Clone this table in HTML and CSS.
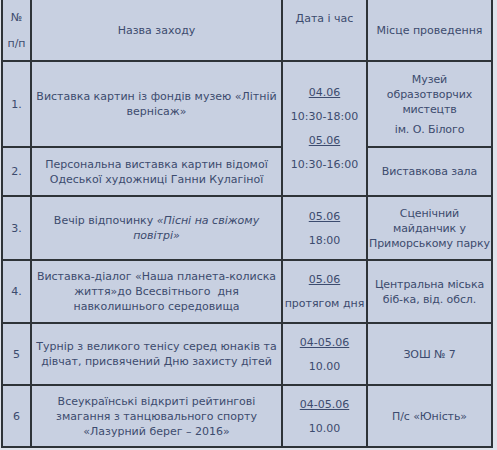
FILE: index.html
```html
<!DOCTYPE html>
<html lang="uk">
<head>
<meta charset="utf-8">
<title>План заходів</title>
<link rel="stylesheet" href="styles.css">
</head>
<body>
<table class="events">
  <colgroup>
    <col class="c-num">
    <col class="c-name">
    <col class="c-date">
    <col class="c-place">
  </colgroup>
  <thead>
    <tr class="r-head">
      <th class="num"><p>№</p><p class="next">п/п</p></th>
      <th>Назва заходу</th>
      <th class="date-head">Дата і час</th>
      <th>Місце проведення</th>
    </tr>
  </thead>
  <tbody>
    <tr class="r1">
      <td class="num">1.</td>
      <td>Виставка картин із фондів музею «Літній<br>вернісаж»</td>
      <td class="date" rowspan="2">
        <p class="d">04.06</p>
        <p class="t">10:30-18:00</p>
        <p class="d">05.06</p>
        <p class="t">10:30-16:00</p>
      </td>
      <td class="place"><p>Музей<br>образотворчих<br>мистецтв</p><p class="gap">ім. О. Білого</p></td>
    </tr>
    <tr class="r2">
      <td class="num">2.</td>
      <td>Персональна виставка картин відомої<br>Одеської художниці Ганни Кулагіної</td>
      <td class="place">Виставкова зала</td>
    </tr>
    <tr class="r3">
      <td class="num">3.</td>
      <td>Вечір відпочинку <em>«Пісні на свіжому<br>повітрі»</em></td>
      <td class="date"><p class="d">05.06</p><p class="t">18:00</p></td>
      <td class="place">Сценічний<br>майданчик у<br>Приморському парку</td>
    </tr>
    <tr class="r4">
      <td class="num">4.</td>
      <td>Виставка-діалог «Наша планета-колиска<br>життя»до Всесвітнього&nbsp; дня<br>навколишнього середовища</td>
      <td class="date"><p class="d">05.06</p><p class="t">протягом дня</p></td>
      <td class="place">Центральна міська<br>біб-ка, від. обсл.</td>
    </tr>
    <tr class="r5">
      <td class="num">5</td>
      <td>Турнір з великого тенісу серед юнаків та<br>дівчат, присвячений Дню захисту дітей</td>
      <td class="date"><p class="d">04-05.06</p><p class="t">10.00</p></td>
      <td class="place">ЗОШ № 7</td>
    </tr>
    <tr class="r6">
      <td class="num">6</td>
      <td>Всеукраїнські відкриті рейтингові<br>змагання з танцювального спорту<br>«Лазурний берег – 2016»</td>
      <td class="date"><p class="d">04-05.06</p><p class="t">10.00</p></td>
      <td class="place">П/с «Юність»</td>
    </tr>
  </tbody>
</table>
</body>
</html>
```
FILE: styles.css
```css
html, body {
  margin: 0;
  padding: 0;
  background: #dfe3eb;
}

body {
  font-family: "DejaVu Sans", Verdana, sans-serif;
  font-size: 11px;
  line-height: 15px;
  color: #3c4b6e;
}

.events {
  margin-left: 1px;
  width: 492px;
  table-layout: fixed;
  border-collapse: separate;
  border-spacing: 0;
  border: 1px solid #2e3338;
  border-top: 0;
  background: #c8d0e1;
}

.c-num { width: 29px; }
.c-name { width: 251px; }
.c-date { width: 85px; }
.c-place { width: 125px; }

.events th,
.events td {
  border: 1px solid #2e3338;
  padding: 0 1px;
  text-align: center;
  vertical-align: middle;
  font-weight: normal;
}

.events th {
  border-top: 0;
}

.events p {
  margin: 0;
}

.events .place {
  white-space: nowrap;
  letter-spacing: -0.1px;
}

.events .next {
  margin-top: 11px;
}

.events .date-head {
  padding-bottom: 24px;
}

.events .gap {
  margin-top: 5px;
}

.events .date .d {
  text-decoration: underline;
}

.events .date p + p {
  margin-top: 9px;
}

.events em {
  font-style: italic;
}

.r-head { height: 61px; }
.r1 { height: 86px; }
.r2 { height: 49px; }
.r3 { height: 64px; }
.r4 { height: 63px; }
.r5 { height: 62px; }
.r6 { height: 62px; }
```
